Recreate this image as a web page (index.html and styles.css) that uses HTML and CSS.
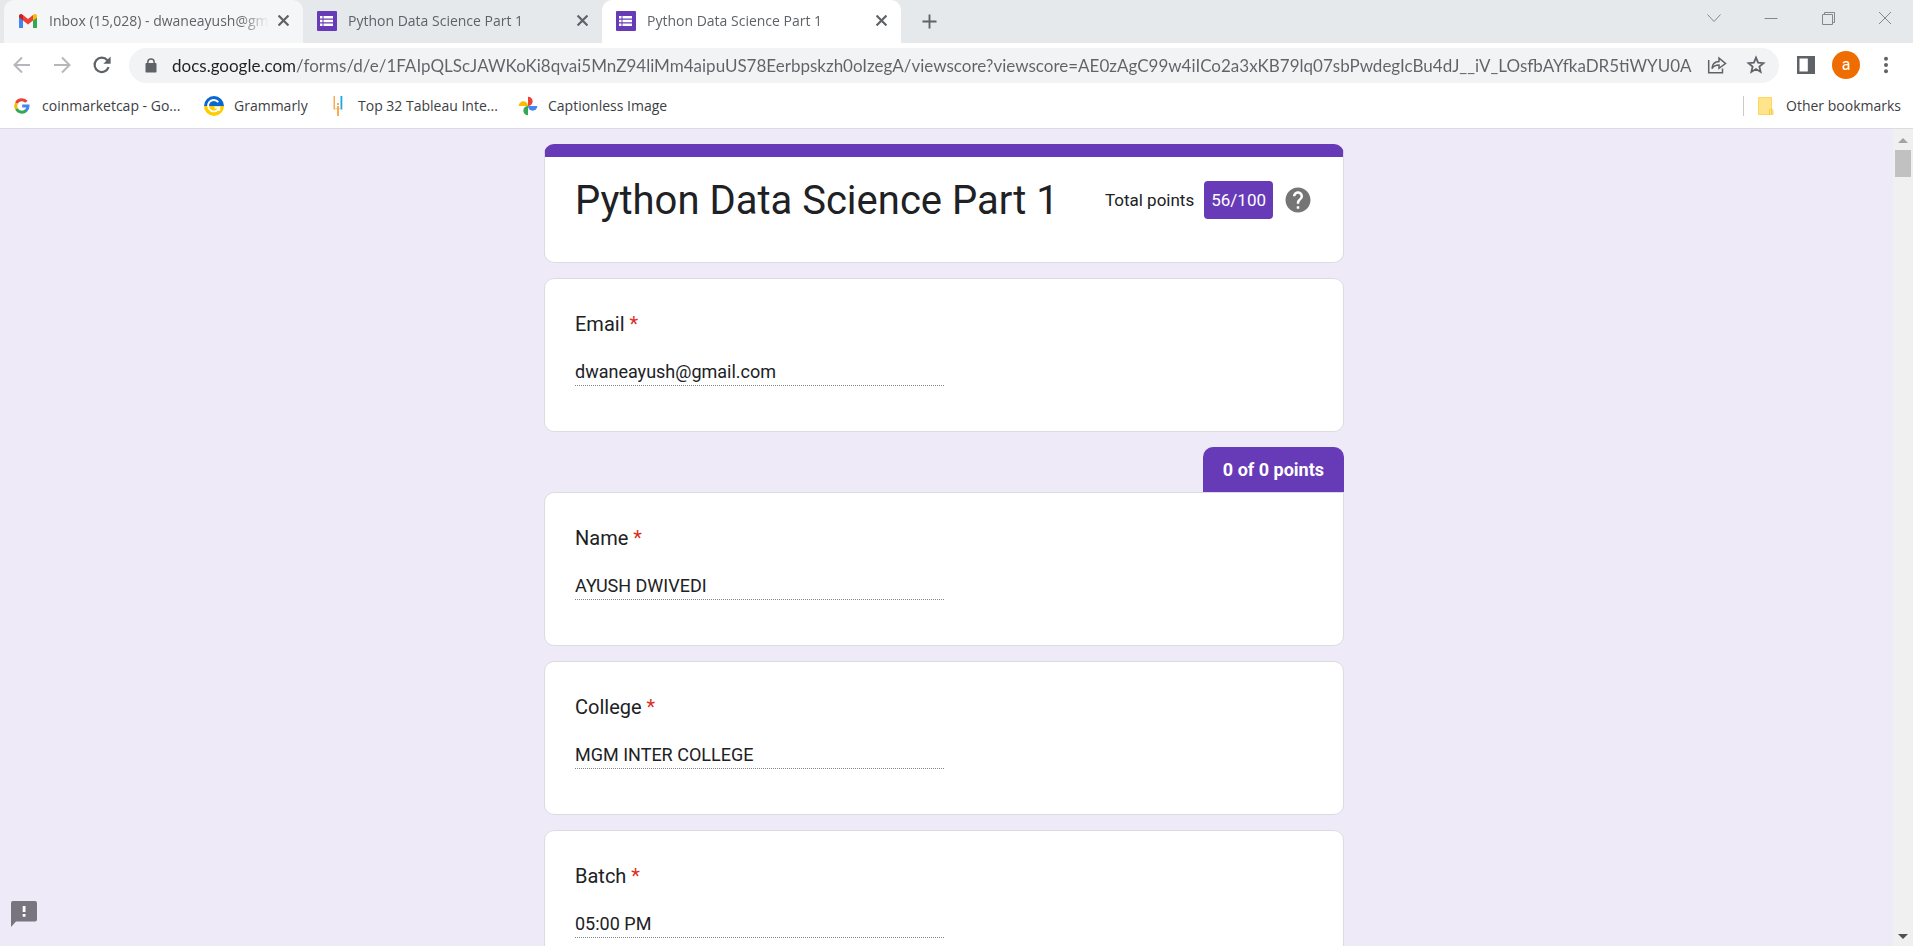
FILE: index.html
```html
<!DOCTYPE html>
<html lang="en">
<head>
<meta charset="utf-8">
<meta name="viewport" content="width=device-width, initial-scale=1">
<title>Python Data Science Part 1</title>
<link rel="stylesheet" href="styles.css">
</head>
<body>
<header class="browser">
  <div class="tabstrip">
    <div class="tabs" role="tablist">
      <div class="tab tab-hover">
        <svg class="favicon" viewBox="0 0 20 20" aria-hidden="true"><path fill="#4285f4" d="M1 6v10.200c0 .5.400.9.900.9H5V9z"/><path fill="#34a853" d="M15 9v8.100h3.100c.5 0 .9-.4.900-.9V6z"/><path fill="#ea4335" d="M5 9.500V4l5 4 5-4v5.500l-5 4z"/><path fill="#c5221f" d="M1 5c0-1.800 2-2.500 3.200-1.600L5 4v5.500L1 6.500z"/><path fill="#fbbc04" d="M19 5c0-1.800-2-2.500-3.200-1.600L15 4v5.500l4-3z"/></svg>
        <a class="tab-title" href="#" role="tab">Inbox (15,028) - dwaneayush@gm</a>
        <button class="tab-close" aria-label="Close tab"><svg viewBox="0 0 10 10"><path d="M.5.5l9 9M9.500.5l-9 9"/></svg></button>
      </div>
      <div class="tab">
        <svg class="favicon" viewBox="0 0 20 20" aria-hidden="true"><rect width="20" height="20" rx="1" fill="#673ab7"/><path fill="#fff" d="M3 5h2.500v2.500H3zM6.500 5H16v2.500H6.500zM3 8.700h2.500v2.500H3zM6.500 8.700H16v2.500H6.500zM3 12.400h2.500v2.500H3zM6.500 12.400H16v2.500H6.500z"/></svg>
        <a class="tab-title" href="#" role="tab">Python Data Science Part 1</a>
        <button class="tab-close" aria-label="Close tab"><svg viewBox="0 0 10 10"><path d="M.5.5l9 9M9.500.5l-9 9"/></svg></button>
      </div>
      <div class="tab tab-active">
        <svg class="favicon" viewBox="0 0 20 20" aria-hidden="true"><rect width="20" height="20" rx="1" fill="#673ab7"/><path fill="#fff" d="M3 5h2.500v2.500H3zM6.500 5H16v2.500H6.500zM3 8.700h2.500v2.500H3zM6.500 8.700H16v2.500H6.500zM3 12.400h2.500v2.500H3zM6.500 12.400H16v2.500H6.500z"/></svg>
        <a class="tab-title" href="#" role="tab" aria-selected="true">Python Data Science Part 1</a>
        <button class="tab-close" aria-label="Close tab"><svg viewBox="0 0 10 10"><path d="M.5.5l9 9M9.500.5l-9 9"/></svg></button>
      </div>
      <button class="new-tab" aria-label="New tab"><svg viewBox="0 0 16 16"><path d="M8 .5v15M.5 8h15"/></svg></button>
    </div>
    <div class="window-controls">
      <button aria-label="Search tabs"><svg viewBox="0 0 14 14"><path d="M.5 3.500L7 10.500l6.500-7"/></svg></button>
      <button aria-label="Minimize"><svg viewBox="0 0 14 14"><path d="M.5 7.500h13"/></svg></button>
      <button aria-label="Restore"><svg viewBox="0 0 14 14"><path d="M1.500 3.500h10v10h-10zM3.500 3.500v-2h10v10h-2"/></svg></button>
      <button aria-label="Close"><svg viewBox="0 0 14 14"><path d="M1 1l12 12M13 1L1 13"/></svg></button>
    </div>
  </div>

  <div class="toolbar">
    <button class="tool" aria-label="Back"><svg class="nav" viewBox="0 0 18 18"><path d="M17 9H2M9 1.500L1.500 9 9 16.500"/></svg></button>
    <button class="tool" aria-label="Forward"><svg class="nav" viewBox="0 0 18 18"><path d="M1 9h15M9 1.500L16.500 9 9 16.500"/></svg></button>
    <button class="tool" aria-label="Reload"><svg class="reload" viewBox="0 0 20 20"><path fill="none" stroke="#5f6368" stroke-width="2.200" d="M16.600 12.200A7.200 7.200 0 1 1 15.300 5.200"/><path fill="#5f6368" d="M18.600 1.500v7.200h-7.200z"/></svg></button>
    <div class="omnibox">
      <svg class="lock" viewBox="0 0 24 24" aria-hidden="true"><path fill="#5f6368" d="M7.500 10h9c.6 0 1 .4 1 1v7.500c0 .6-.4 1-1 1h-9c-.6 0-1-.4-1-1V11c0-.6.4-1 1-1z"/><path fill="none" stroke="#5f6368" stroke-width="1.500" d="M8.800 11V9.200a3.200 3.200 0 0 1 6.400 0V11"/></svg>
      <input class="url" type="text" aria-label="Address" value="docs.google.com/forms/d/e/1FAIpQLScJAWKoKi8qvai5MnZ94liMm4aipuUS78Eerbpskzh0oIzegA/viewscore?viewscore=AE0zAgC99w4iICo2a3xKB79lq07sbPwdegIcBu4dJ__iV_LOsfbAYfkaDR5tiWYU0A">
      <button class="omni-btn" aria-label="Share"><svg viewBox="0 0 20 20"><path fill="none" stroke="#5f6368" stroke-width="1.500" d="M1.700 5v12.800h13.800V13.500M5 13.500c.3-4.300 3-6.700 7-6.900V3.200L18.500 8.500 12 13.300v-3.200c-3.200 0-5.500 1-7 3.400z"/></svg></button>
      <button class="omni-btn" aria-label="Bookmark this tab"><svg viewBox="0 0 20 20"><path fill="none" stroke="#5f6368" stroke-width="1.800" d="M10 2.600l2.100 5 5.400.5-4.100 3.500 1.200 5.300L10 14.100l-4.600 2.800 1.200-5.300-4.100-3.500 5.400-.5z"/></svg></button>
    </div>
    <button class="tool" aria-label="Side panel"><svg viewBox="0 0 18 18"><path fill="#5f6368" fill-rule="evenodd" d="M0 0h18v18H0zM2.500 2.500v13h8.300v-13z"/></svg></button>
    <button class="tool" aria-label="Profile"><span class="avatar">a</span></button>
    <button class="tool" aria-label="Menu"><svg viewBox="0 0 18 18"><g fill="#5f6368"><circle cx="9" cy="2.800" r="2"/><circle cx="9" cy="9" r="2"/><circle cx="9" cy="15.200" r="2"/></g></svg></button>
  </div>

  <nav class="bookmarks" aria-label="Bookmarks">
    <a class="bookmark b-first" href="#">
      <svg viewBox="0 0 20 20"><g fill="none" stroke-width="3"><path stroke="#ea4335" d="M4.400 7.200A6.100 6.100 0 0 1 14.500 5.800"/><path stroke="#fbbc04" d="M4.500 12.900a6.100 6.100 0 0 1 0-5.800"/><path stroke="#34a853" d="M14.200 14.400a6.100 6.100 0 0 1-9.700-1.500"/><path stroke="#4285f4" d="M10.200 10H16a6.100 6.100 0 0 1-2 4.600"/></g></svg>
      <span>coinmarketcap - Go...</span></a>
    <a class="bookmark b-second" href="#">
      <svg viewBox="0 0 20 20"><path fill="#0a66d0" d="M0 10a10 10 0 0 1 20 0z"/><path fill="#fc0" d="M0 10a10 10 0 0 0 20 0z"/><path fill="none" stroke="#fff" stroke-width="1.900" d="M14.300 6.200a5.700 5.700 0 1 0 .9 5.300H10.500M15.300 11v4"/></svg>
      <span>Grammarly</span></a>
    <a class="bookmark b-third" href="#">
      <svg viewBox="0 0 20 20"><path fill="#f6ac4f" d="M5.500 0h1.500v13.500H5.500zM9 10h2v10H9zM9 7h2v2H9z"/><path fill="#1ba8e0" d="M12.500 0h1.800v13.500h-1.800z"/><path fill="#f6ac4f" opacity=".5" d="M7 12h2v1.500H7zM11 12h1.500v1.500H11z"/></svg>
      <span>Top 32 Tableau Inte...</span></a>
    <a class="bookmark" href="#">
      <svg viewBox="0 0 20 20"><path fill="#ea4335" d="M10 .7a4.600 4.600 0 0 1 0 9.300z"/><path fill="#4285f4" d="M19.300 10a4.600 4.600 0 0 1-9.300 0z"/><path fill="#34a853" d="M10 19.300a4.600 4.600 0 0 1 0-9.300z"/><path fill="#fbbc04" d="M.7 10a4.600 4.600 0 0 1 9.300 0z"/></svg>
      <span>Captionless Image</span></a>
    <a class="bookmark other" href="#">
      <svg viewBox="0 0 20 20"><path fill="#ffe48c" stroke="#fbd75c" d="M2.500 1.500h13v11.500c1.400 0 1.500 1 1.500 2v3.500H2.500z"/><path fill="none" stroke="#f5cd4a" d="M13.500 18.500V14c0-1.300 2-1.300 2 0v4.500"/></svg>
      <span>Other bookmarks</span></a>
  </nav>
</header>

<div class="viewport">
  <main class="page">
    <form class="form">
      <section class="card title-card">
        <h1>Python Data Science Part 1</h1>
        <div class="score"><span>Total points</span><span class="score-value">56/100</span>
          <button type="button" class="help" aria-label="Help"><svg viewBox="0 0 24 24"><path fill="#757575" d="M12 2C6.480 2 2 6.480 2 12s4.480 10 10 10 10-4.480 10-10S17.520 2 12 2zm1 17h-2v-2h2v2zm2.070-7.750l-.9.920C13.450 12.900 13 13.500 13 15h-2v-.5c0-1.100.45-2.100 1.170-2.830l1.240-1.260c.37-.36.590-.86.590-1.410 0-1.100-.9-2-2-2s-2 .9-2 2H8c0-2.210 1.790-4 4-4s4 1.790 4 4c0 .88-.36 1.680-.93 2.250z"/></svg></button>
        </div>
      </section>
      <section class="card question">
        <label for="email">Email <span class="required">*</span></label>
        <input id="email" type="email" value="dwaneayush@gmail.com" readonly>
      </section>
      <div class="graded">
        <div class="points">0 of 0 points</div>
        <section class="card question graded-card">
          <label for="name">Name <span class="required">*</span></label>
          <input id="name" type="text" value="AYUSH DWIVEDI" readonly>
        </section>
      </div>
      <section class="card question">
        <label for="college">College <span class="required">*</span></label>
        <input id="college" type="text" value="MGM INTER COLLEGE" readonly>
      </section>
      <section class="card question">
        <label for="batch">Batch <span class="required">*</span></label>
        <input id="batch" type="text" value="05:00 PM" readonly>
      </section>
    </form>
  </main>
  <button class="feedback" aria-label="Report a problem"><svg viewBox="0 0 26 26"><path fill="#79757e" d="M2 0h22a2 2 0 0 1 2 2v16.500a2 2 0 0 1-2 2H5L0 26V2a2 2 0 0 1 2-2z"/><path fill="#fff" d="M11.700 5h2.800v6h-2.800zM11.700 13h2.800v2.800h-2.800z"/></svg></button>
  <div class="scrollbar" aria-hidden="true">
    <svg viewBox="0 0 20 20"><path fill="#a3a3a3" d="M5 14h10l-5-5z"/></svg>
    <div class="thumb"></div>
    <svg class="down" viewBox="0 0 20 20"><path fill="#505050" d="M5 8h10l-5 5z"/></svg>
  </div>
</div>
</body>
</html>
```
FILE: styles.css
```css
* { box-sizing: border-box; }
body {
  margin: 0;
  height: 100vh;
  display: flex;
  flex-direction: column;
  overflow: hidden;
  font-family: Roboto, sans-serif;
  color: #202124;
}
button { border: 0; padding: 0; background: none; font: inherit; color: inherit; }
a { color: inherit; text-decoration: none; }
svg { display: block; flex: none; }

/* Browser chrome */
.browser {
  flex: none;
  background: #fff;
  border-bottom: 1px solid #dadce0;
  font-family: "Open Sans", "Noto Sans", sans-serif;
  font-size: 14px;
}
.tabstrip { display: flex; justify-content: space-between; height: 43px; background: #e5e9eb; }
.tabs { display: flex; padding-left: 4px; min-width: 0; }
.tab {
  display: flex;
  align-items: center;
  width: 299px;
  padding: 0 14px 2px;
  border-radius: 10px 10px 0 0;
  color: #5f6368;
}
.tab-hover { background: #f4f6f8; }
.tab-active { background: #fff; }
.favicon { width: 20px; height: 20px; margin-right: 11px; }
.tab-title {
  flex: 1;
  min-width: 0;
  overflow: hidden;
  white-space: nowrap;
  margin-right: 8px;
  mask-image: linear-gradient(to left, transparent, #000 30px);
}
.tab-close { width: 12px; height: 20px; display: grid; place-items: center; }
.tab-close svg { width: 11px; fill: none; stroke: #5f6368; stroke-width: 2; }
.new-tab { width: 56px; display: grid; place-items: center; }
.new-tab svg { width: 15px; stroke: #5f6368; stroke-width: 2; }
.window-controls { display: flex; height: 36px; }
.window-controls button { width: 57px; display: grid; place-items: center; }
.window-controls svg { width: 14px; height: 14px; fill: none; stroke: #85888b; }

.toolbar { display: flex; align-items: center; height: 44px; padding: 0 7px 0 2px; }
.tool { flex: none; width: 40px; height: 40px; display: grid; place-items: center; }
.tool svg { width: 18px; height: 18px; }
.tool .nav { fill: none; stroke: #b5b7ba; stroke-width: 2; }
.tool .reload { width: 20px; height: 20px; }
.omnibox {
  flex: 1;
  min-width: 0;
  display: flex;
  align-items: center;
  height: 35px;
  margin: 0 7px;
  padding: 0 4px 0 10px;
  border-radius: 18px;
  background: #f1f3f4;
}
.lock { width: 24px; height: 24px; margin-right: 9px; }
.url {
  flex: 1;
  min-width: 0;
  border: 0;
  padding: 0;
  height: 28px;
  outline: 0;
  font: 17px Lato, "Open Sans", sans-serif;
  color: transparent;
  background: linear-gradient(to right, #202124 124px, #5f6368 124px);
  -webkit-background-clip: text;
  background-clip: text;
}
.omni-btn { width: 39px; height: 35px; display: grid; place-items: center; }
.omni-btn svg { width: 20px; height: 20px; }
.avatar {
  width: 28px;
  height: 28px;
  border-radius: 50%;
  background: #ef6c00;
  color: #fff;
  font: 16px/28px Roboto, sans-serif;
  text-align: center;
}

.bookmarks { display: flex; align-items: center; height: 41px; padding: 0 12px 4px; color: #3c4043; }
.bookmark { display: flex; align-items: center; gap: 10px; white-space: nowrap; }
.bookmark svg { width: 20px; height: 20px; }
.b-first { width: 192px; }
.b-second { width: 124px; }
.b-third { width: 190px; }
.other { margin-left: auto; padding-left: 12px; border-left: 1px solid #c8cacd; }

/* Form page */
.viewport { position: relative; flex: 1; min-height: 0; display: flex; background: #eeeaf7; }
.page { flex: 1; overflow: hidden; padding: 15px 5px 0 0; }
.form { display: flex; flex-direction: column; gap: 15px; max-width: 800px; margin: 0 auto; }
.card { background: #fff; border: 1px solid #dadce0; border-radius: 10px; }
.title-card {
  display: flex;
  justify-content: space-between;
  align-items: center;
  padding: 14px 30px 33px;
  border-top: 13px solid #673ab7;
}
h1 { margin: 2px 0 0; font-size: 40px; font-weight: 400; line-height: 56px; }
.score { display: flex; align-items: center; font-size: 17px; }
.score-value { margin: 0 10px; padding: 0 7px; border-radius: 4px; background: #673ab7; color: #fff; line-height: 38px; }
.help svg { width: 30px; height: 30px; }
.question { padding: 30px 30px 45px; }
.question label { display: block; margin-bottom: 20px; font-size: 20px; line-height: 30px; }
.required { color: #d93025; }
.question input {
  display: block;
  width: 50%;
  height: 27px;
  padding: 0 0 2px;
  border: 0;
  border-bottom: 1px dotted #80868b;
  background: none;
  color: inherit;
  font: 18px Roboto, sans-serif;
}
.graded { display: flex; flex-direction: column; }
.points {
  align-self: flex-end;
  padding: 0 20px;
  border-radius: 10px 10px 0 0;
  background: #673ab7;
  color: #fff;
  font-size: 18px;
  font-weight: 700;
  line-height: 45px;
}
.graded-card { border-top-right-radius: 0; }
.feedback { position: absolute; left: 11px; bottom: 19px; }
.feedback svg { width: 26px; height: 26px; }
.scrollbar { flex: none; width: 20px; display: flex; flex-direction: column; background: #f0f0f0; }
.scrollbar svg { width: 20px; height: 20px; }
.thumb { height: 27px; margin: 1px 2px 0; background: #c1c1c1; }
.scrollbar .down { margin-top: auto; }
```
